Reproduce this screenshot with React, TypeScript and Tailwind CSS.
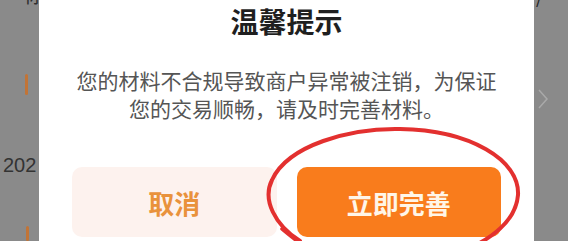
export default function App() {
  return (
    <div
      className="relative flex h-[241px] w-[568px] overflow-hidden bg-[#8a8a8a]"
      style={{ fontFamily: '"Noto Sans CJK SC", "Noto Sans", sans-serif' }}
    >
      {/* page behind the dialog, dimmed */}
      <div className="flex w-[39px] shrink-0 flex-col">
        <span className="ml-[24px] mt-[-16px] text-[20px] leading-[22px] text-[#2e2e2e]">你</span>
        <div className="ml-[25px] mt-[68px] h-[23px] w-[3px] rounded-sm bg-[#c27436]" />
        <span
          className="ml-[3px] mt-[60px] text-[20px] leading-[20px] text-[#333]"
          style={{ fontFamily: '"Liberation Sans", sans-serif' }}
        >
          202
        </span>
        <div className="ml-[26px] mt-[51px] h-[16px] w-[3px] rounded-sm bg-[#c27436]" />
      </div>

      {/* dialog */}
      <div className="flex w-[495px] shrink-0 flex-col items-center bg-white">
        <h2 className="pt-[7px] text-[28px] font-bold leading-[28px] text-[#1f1f1f]">温馨提示</h2>
        <p className="mt-[31px] text-center text-[21px] leading-[28px] text-[#555]">
          您的材料不合规导致商户异常被注销，为保证
          <br />
          您的交易顺畅，请及时完善材料。
        </p>
        <div className="mt-[45px] flex w-full gap-5 px-[33px]">
          <button className="flex h-[70px] flex-1 items-center justify-center rounded-[10px] bg-[#fdf2ee] text-[26px] font-bold text-[#e9923c]">
            取消
          </button>
          <button className="flex h-[70px] flex-1 items-center justify-center rounded-[10px] bg-[#f97c1c] text-[26px] font-bold text-[#fff6e8]">
            立即完善
          </button>
        </div>
      </div>

      <div className="flex flex-1 flex-col">
        <span className="ml-[2px] mt-[-14px] text-[18px] leading-[20px] text-[#222]">/</span>
        <svg className="ml-[3px] mt-[82px]" width="12" height="22" viewBox="0 0 12 22" fill="none">
          <path d="M2 2 L10 11 L2 20" stroke="#a9a9a9" strokeWidth="1.5" />
        </svg>
      </div>

      {/* red hand-drawn circle */}
      <svg className="pointer-events-none absolute left-0 top-0" width="568" height="241" viewBox="0 0 568 241" fill="none">
        <path
          d="M300 241 C 275 225, 262 200, 272 180 C 288 145, 350 128, 400 129 C 470 130, 520 160, 518 195 C 516 220, 495 236, 470 248"
          stroke="#e3302f"
          strokeWidth="4"
          strokeLinecap="round"
        />
        <path d="M282 229 C 290 236, 296 240, 302 245" stroke="#e3302f" strokeWidth="3.5" strokeLinecap="round" />
      </svg>
    </div>
  )
}
